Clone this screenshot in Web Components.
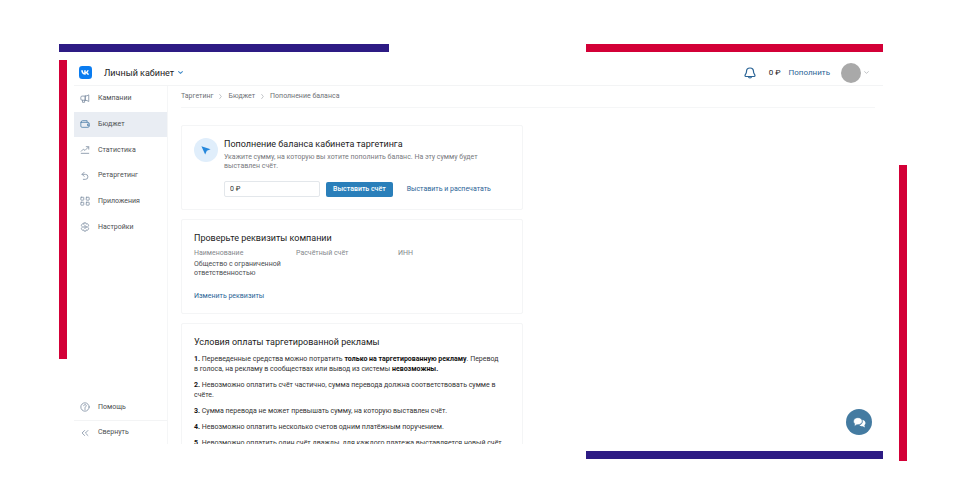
<!DOCTYPE html>
<html lang="ru">
<head>
<meta charset="utf-8">
<meta name="viewport" content="width=device-width, initial-scale=1">
<title>Личный кабинет</title>
<style>
  body {
    margin: 0;
    background: #fff;
    color: #222;
    font-family: Roboto, "Liberation Sans", sans-serif;
    font-size: 7px;
    line-height: 9px;
  }
</style>
</head>
<body>

<page-frame>
  <ads-cabinet>
    <cabinet-header slot="header"></cabinet-header>
    <side-menu slot="menu"></side-menu>
    <bread-crumbs></bread-crumbs>
    <card-list>
      <ui-card><top-up-form></top-up-form></ui-card>
      <ui-card><company-details></company-details></ui-card>
      <ui-card><payment-terms></payment-terms></ui-card>
    </card-list>
    <chat-button slot="chat"></chat-button>
  </ads-cabinet>
</page-frame>

<script>
// Attach an open shadow root and fill it with the component's markup
function render(host, html) {
  host.attachShadow({ mode: 'open' });
  const template = document.createElement('template');
  template.innerHTML = html;
  host.shadowRoot.appendChild(template.content.cloneNode(true));
}

// Line icons, 24x24
const icons = {
  megaphone: '<path d="M13 5H5a3 3 0 0 0-3 3v4a3 3 0 0 0 3 3h8M6 15v5h5v-5M13 5c3 0 5-1 8-3v16c-3-2-5-3-8-3zM13 5v10"/>',
  wallet: '<path d="M3 8V7a3 3 0 0 1 3-3h11v4M3 8h16a3 3 0 0 1 3 3v6a3 3 0 0 1-3 3H5a3 3 0 0 1-3-3V8"/><path d="M22 12h-4v4h4"/>',
  stats: '<path d="M3 15l5-5 4 3 8-8M15 4h6v6M3 20h18"/>',
  retarget: '<path d="M10 3L5 8l5 5M5 8h8a6 6 0 0 1 0 12H8"/>',
  apps: '<rect x="2" y="3" width="7" height="7" rx="1"/><rect x="15" y="3" width="7" height="7" rx="1"/><rect x="2" y="15" width="7" height="7" rx="1"/><rect x="15" y="15" width="7" height="7" rx="1"/>',
  gear: '<path d="M10 2h4l1 3 3-1 3 4-2 2v4l2 2-3 4-3-1-1 3h-4l-1-3-3 1-3-4 2-2v-4L3 8l3-4 3 1z"/><circle cx="12" cy="12" r="3"/>',
  help: '<circle cx="12" cy="12" r="10"/><path d="M9 9c0-4 6-4 6 0 0 2-3 2-3 5M12 16v2"/>',
  collapse: '<path d="M11 6l-6 6 6 6M19 6l-6 6 6 6"/>',
  bell: '<path d="M12 2c-5 0-7 3-7 7 0 5-3 5-3 8 0 1 1 2 2 2h16c1 0 2-1 2-2 0-3-3-3-3-8 0-4-2-7-7-7zM9 19c0 4 6 4 6 0"/>',
  chevron: '<path d="M3 8l9 8 9-8"/>',
  next: '<path d="M8 2l8 10-8 10"/>',
};

class UiIcon extends HTMLElement {
  constructor() {
    super();
    render(this, `
      <style>
        :host { display: block; flex: none; width: 10px; height: 10px; }
        svg { display: block; width: 100%; height: 100%; fill: none; stroke: currentColor;
          stroke-width: var(--stroke, 2); stroke-linecap: round; stroke-linejoin: round; }
      </style>
      <svg viewBox="0 0 24 24" aria-hidden="true">${icons[this.getAttribute('name')]}</svg>
    `);
  }
}

// Coloured bars around the content area
class PageFrame extends HTMLElement {
  constructor() {
    super();
    render(this, `
      <style>
        :host {
          display: grid;
          box-sizing: border-box;
          height: 100vh;
          min-height: 400px;
          padding: 44px 53px 43px 59px;
          grid-template-columns: 8px minmax(0, 1fr) 8px;
          grid-template-rows: 8px minmax(0, 1fr) 8px 2px;
        }
        .blue { background: #2d1b84; }
        .red { background: #d30037; }
        .top, .bottom { grid-column: 1 / 3; display: flex; justify-content: space-between; margin-right: 16px; }
        .top { grid-row: 1; }
        .bottom { grid-row: 3; justify-content: flex-end; }
        .top .blue { width: 40%; }
        .top .red, .bottom .blue { width: 36%; }
        .left { grid-area: 2 / 1; height: 75%; margin-top: 8px; }
        .right { grid-area: 1 / 3 / 5; align-self: end; height: 71%; }
        .content { grid-area: 2 / 2; min-height: 0; margin: 8px 16px 7px 7px; }
      </style>
      <div class="top"><div class="blue"></div><div class="red"></div></div>
      <div class="left red"></div>
      <div class="content"><slot></slot></div>
      <div class="right red"></div>
      <div class="bottom"><div class="blue"></div></div>
    `);
  }
}

class AdsCabinet extends HTMLElement {
  constructor() {
    super();
    render(this, `
      <style>
        :host { display: grid; position: relative; height: 100%; overflow: hidden;
          grid-template: auto minmax(0, 1fr) / 94px minmax(0, 1fr); }
        header { grid-column: 1 / 3; }
        main { min-height: 0; overflow: hidden; padding: 0 8px 0 13px; }
        .chat { position: absolute; right: 11px; bottom: 9px; }
      </style>
      <header><slot name="header"></slot></header>
      <slot name="menu"></slot>
      <main><slot></slot></main>
      <div class="chat"><slot name="chat"></slot></div>
    `);
  }
}

class CabinetHeader extends HTMLElement {
  constructor() {
    super();
    render(this, `
      <style>
        :host { display: flex; align-items: center; height: 25px; padding: 0 14px 0 5px;
          border-bottom: 1px solid #f3f4f5; font-size: 8px; line-height: 12px; }
        button { display: flex; align-items: center; padding: 0; border: 0; background: none;
          font: inherit; color: inherit; }
        a { color: #2a6496; text-decoration: none; }
        .logo, .logo svg { display: block; width: 13px; height: 13px; }
        .title { gap: 4px; margin-left: 12px; font-size: 9px; }
        .title ui-icon { width: 5px; height: 5px; color: #3f8ac8; --stroke: 5; }
        .bell { margin-left: auto; margin-right: 13px; color: #2a6496; }
        .bell ui-icon { width: 12px; height: 12px; --stroke: 2.4; }
        .sum { margin-right: 8px; }
        .user { gap: 3px; margin-left: 11px; color: #b5b8bc; }
        .user ui-icon { width: 5px; height: 5px; --stroke: 4; }
        .avatar { width: 20px; height: 20px; border-radius: 50%; background: #a9a9a9; }
      </style>
      <a class="logo" href="#" aria-label="VK">
        <svg viewBox="0 0 24 24">
          <rect width="24" height="24" rx="6" fill="#0a7cf0"/>
          <path d="M4 8h3c.2 3 1.4 4.600 2.600 5V8h2.800v3.200c1.300-.2 2.400-1.600 2.900-3.200H18c-.4 1.800-1.500 3.200-2.600 4 1.300.7 2.500 2 3.200 4.200h-3c-.6-1.600-1.700-2.800-3.200-3v3H12C7 16.200 4.200 13 4 8z" fill="#fff"/>
        </svg>
      </a>
      <button class="title">Личный кабинет <ui-icon name="chevron"></ui-icon></button>
      <button class="bell" aria-label="Уведомления"><ui-icon name="bell"></ui-icon></button>
      <span class="sum">0 ₽</span>
      <a href="#">Пополнить</a>
      <button class="user" aria-label="Профиль"><span class="avatar"></span><ui-icon name="chevron"></ui-icon></button>
    `);
  }
}

class MenuItem extends HTMLElement {
  constructor() {
    super();
    render(this, `
      <style>
        :host { display: grid; color: #8292a5; }
        :host([active]) { background: #e9edf3; color: #5484ad; }
        a { display: flex; align-items: center; gap: 8px; padding-left: 6px; color: inherit; text-decoration: none; }
        span { color: #4d4f52; }
      </style>
      <a href="#"><ui-icon name="${this.getAttribute('icon')}"></ui-icon><span><slot></slot></span></a>
    `);
  }
}

class SideMenu extends HTMLElement {
  constructor() {
    super();
    render(this, `
      <style>
        :host { display: flex; flex-direction: column; justify-content: space-between;
          box-sizing: border-box; min-height: 0; border-right: 1px solid #f5f6f7; }
        nav { display: grid; height: 154px; grid-auto-rows: 1fr; }
        .bottom { height: auto; grid-auto-rows: auto; grid-template-rows: 26px 24px; }
        .bottom :last-child { border-top: 1px solid #f3f4f5; }
      </style>
      <nav>
        <menu-item icon="megaphone">Кампании</menu-item>
        <menu-item icon="wallet" active>Бюджет</menu-item>
        <menu-item icon="stats">Статистика</menu-item>
        <menu-item icon="retarget">Ретаргетинг</menu-item>
        <menu-item icon="apps">Приложения</menu-item>
        <menu-item icon="gear">Настройки</menu-item>
      </nav>
      <nav class="bottom">
        <menu-item icon="help">Помощь</menu-item>
        <menu-item icon="collapse">Свернуть</menu-item>
      </nav>
    `);
  }
}

class BreadCrumbs extends HTMLElement {
  constructor() {
    super();
    render(this, `
      <style>
        :host { display: flex; align-items: center; gap: 5px; height: 21px;
          border-bottom: 1px solid #f5f6f7; color: #6d7075; }
        a { color: inherit; text-decoration: none; }
        a:first-child { color: #222; }
        ui-icon { width: 5px; height: 5px; color: #a0a4aa; --stroke: 3; }
      </style>
      <a href="#">Таргетинг</a><ui-icon name="next"></ui-icon>
      <a href="#">Бюджет</a><ui-icon name="next"></ui-icon>
      <span>Пополнение баланса</span>
    `);
  }
}

class CardList extends HTMLElement {
  constructor() {
    super();
    render(this, `
      <style>
        :host { display: grid; gap: 9px; max-width: 342px; margin-top: 17px; }
      </style>
      <slot></slot>
    `);
  }
}

class UiCard extends HTMLElement {
  constructor() {
    super();
    render(this, `
      <style>
        :host { display: block; padding: 12px; border: 1px solid #f4f5f6; border-radius: 2px; }
      </style>
      <slot></slot>
    `);
  }
}

const heading = 'h2 { margin: 0; color: #1c1c1c; font-size: 9px; line-height: 12px; font-weight: 400; }';

class TopUpForm extends HTMLElement {
  constructor() {
    super();
    render(this, `
      <style>
        ${heading}
        :host { display: flex; gap: 6px; }
        .badge { flex: none; display: grid; place-items: center; width: 24px; height: 24px;
          border-radius: 50%; background: #e0eefb; }
        .badge svg { width: 10px; height: 10px; fill: #2688dc; }
        p { max-width: 260px; margin: 3px 0 10px; color: #77797d; }
        form { display: flex; align-items: center; gap: 6px; }
        input { box-sizing: border-box; width: 96px; height: 16px; padding: 0 5px; border: 1px solid #e3e7eb;
          border-radius: 2px; font: inherit; color: #333; }
        button { height: 15px; padding: 0 7px; border: 0; border-radius: 2px; background: #2a7fba;
          color: #fff; font: inherit; font-weight: 500; }
        a { margin-left: 8px; color: #2a6496; text-decoration: none; }
      </style>
      <div class="badge"><svg viewBox="0 0 24 24" aria-hidden="true"><path d="M1 3l22 7-9 4-4 9z"/></svg></div>
      <div>
        <h2>Пополнение баланса кабинета таргетинга</h2>
        <p>Укажите сумму, на которую вы хотите пополнить баланс. На эту сумму будет выставлен счёт.</p>
        <form>
          <input type="text" value="0 ₽" aria-label="Сумма">
          <button type="button">Выставить счёт</button>
          <a href="#">Выставить и распечатать</a>
        </form>
      </div>
    `);
  }
}

class CompanyDetails extends HTMLElement {
  constructor() {
    super();
    render(this, `
      <style>
        ${heading}
        :host { display: block; }
        table { width: 100%; margin: 5px 0 12px; border-collapse: collapse; table-layout: fixed; }
        th, td { padding: 0 0 2px; text-align: left; vertical-align: top; font-weight: 400; }
        th { color: #85888c; }
        td { padding-right: 8px; color: #4a4c50; }
        th:nth-child(-n+2) { width: 102px; }
        a { color: #2a6496; text-decoration: none; }
      </style>
      <h2>Проверьте реквизиты компании</h2>
      <table>
        <thead><tr><th>Наименование</th><th>Расчётный счёт</th><th>ИНН</th></tr></thead>
        <tbody><tr><td>Общество с ограниченной ответственностью</td><td></td><td></td></tr></tbody>
      </table>
      <a href="#">Изменить реквизиты</a>
    `);
  }
}

class PaymentTerms extends HTMLElement {
  constructor() {
    super();
    render(this, `
      <style>
        ${heading}
        :host { display: block; color: #333; }
        p { margin: 6px 0; line-height: 10px; }
        b { color: #111; }
      </style>
      <h2>Условия оплаты таргетированной рекламы</h2>
      <p><b>1.</b> Переведенные средства можно потратить <b>только на таргетированную рекламу</b>. Перевод в&nbsp;голоса, на рекламу в сообществах или вывод из системы <b>невозможны.</b></p>
      <p><b>2.</b> Невозможно оплатить счёт частично, сумма перевода должна соответствовать сумме в счёте.</p>
      <p><b>3.</b> Сумма перевода не может превышать сумму, на которую выставлен счёт.</p>
      <p><b>4.</b> Невозможно оплатить несколько счетов одним платёжным поручением.</p>
      <p><b>5.</b> Невозможно оплатить один счёт дважды, для каждого платежа выставляется новый счёт.</p>
    `);
  }
}

class ChatButton extends HTMLElement {
  constructor() {
    super();
    render(this, `
      <style>
        :host { display: block; }
        button { display: grid; place-items: center; width: 26px; height: 26px; padding: 0; border: 0;
          border-radius: 50%; background: #447ba1; }
        svg { width: 13px; height: 13px; }
      </style>
      <button aria-label="Чат">
        <svg viewBox="0 0 24 24" fill="#fff">
          <path d="M17 7c4 1 6 3 6 6 0 2-1 3-2 4l1 4-4-2c-3 0-5-1-6-2 4-1 7-4 5-10z"/>
          <path d="M9 3c5 0 8 3 8 6.500S14 16 9 16l-2 0-4 3 0-5C1.500 13 1 11 1 9.500 1 6 4 3 9 3z" stroke="#447ba1"/>
        </svg>
      </button>
    `);
  }
}

customElements.define('ui-icon', UiIcon);
customElements.define('page-frame', PageFrame);
customElements.define('ads-cabinet', AdsCabinet);
customElements.define('cabinet-header', CabinetHeader);
customElements.define('menu-item', MenuItem);
customElements.define('side-menu', SideMenu);
customElements.define('bread-crumbs', BreadCrumbs);
customElements.define('card-list', CardList);
customElements.define('ui-card', UiCard);
customElements.define('top-up-form', TopUpForm);
customElements.define('company-details', CompanyDetails);
customElements.define('payment-terms', PaymentTerms);
customElements.define('chat-button', ChatButton);
</script>
</body>
</html>
